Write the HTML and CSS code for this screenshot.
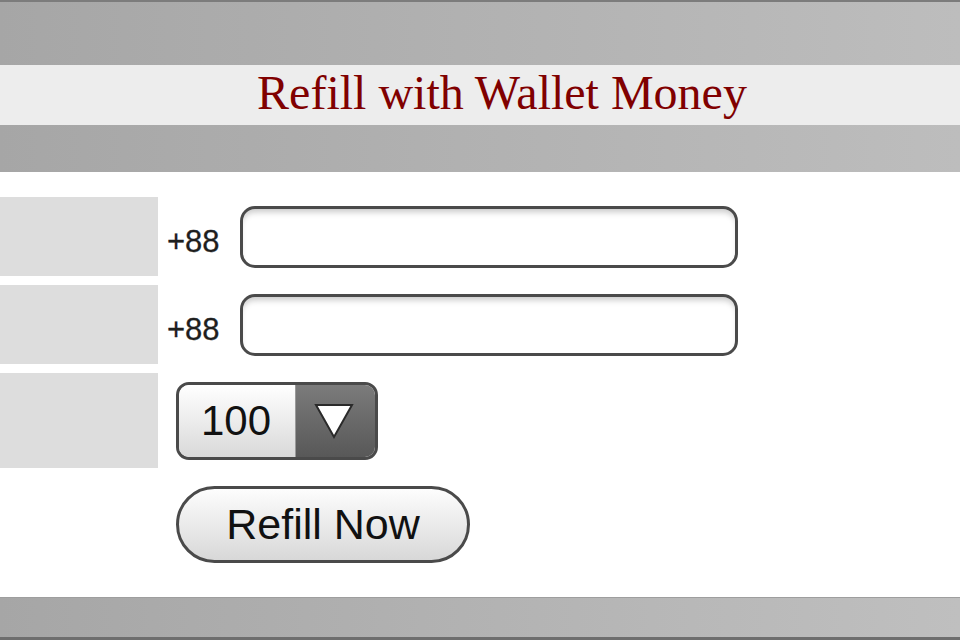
FILE: index.html
```html
<!DOCTYPE html>
<html>
<head>
<meta charset="utf-8">
<link rel="stylesheet" href="styles.css">
</head>
<body>
<div class="page">
  <div class="band band-top"></div>
  <div class="title-band"><h1 class="title">Refill with Wallet Money</h1></div>
  <div class="band band-sub"></div>
  <main class="main">
    <div class="form">
      <div class="row">
        <div class="label-cell"></div>
        <div class="field">
          <span class="prefix">+88</span>
          <div class="input"></div>
        </div>
      </div>
      <div class="row">
        <div class="label-cell"></div>
        <div class="field">
          <span class="prefix">+88</span>
          <div class="input"></div>
        </div>
      </div>
      <div class="row row-tall">
        <div class="label-cell"></div>
        <div class="field field-select">
          <div class="select">
            <span class="select-value">100</span>
            <span class="select-arrow">
              <svg width="42" height="38" viewBox="0 0 42 38">
                <polygon points="3,3 39,3 21,35" fill="#ffffff" stroke="#2a2a2a" stroke-width="2" stroke-linejoin="miter"/>
              </svg>
            </span>
          </div>
        </div>
      </div>
    </div>
    <div class="actions">
      <button class="btn">Refill Now</button>
    </div>
  </main>
  <div class="footer"></div>
</div>
</body>
</html>
```

FILE: styles.css
```css
html, body {
  margin: 0;
  padding: 0;
  background: #ffffff;
}
.page {
  width: 960px;
  height: 640px;
  display: flex;
  flex-direction: column;
  overflow: hidden;
}
.band {
  background: linear-gradient(to right, #a6a6a6, #bdbdbd);
}
.band-top {
  height: 63px;
  border-top: 2px solid #7c7c7c;
}
.band-sub {
  height: 47px;
}
.title-band {
  height: 60px;
  background: #ededed;
  display: flex;
  align-items: center;
  justify-content: center;
  padding-left: 44px;
}
.title {
  margin: 0;
  font-family: "Liberation Serif", "Times New Roman", serif;
  font-weight: normal;
  font-size: 48px;
  line-height: 60px;
  color: #800000;
  padding-bottom: 4px;
}
.main {
  flex: 1;
  padding-top: 25px;
  display: flex;
  flex-direction: column;
}
.form {
  display: flex;
  flex-direction: column;
  gap: 9px;
}
.row {
  display: flex;
  height: 79px;
}
.row-tall {
  height: 95px;
}
.label-cell {
  width: 158px;
  background: #dddddd;
  flex: none;
}
.field {
  display: flex;
  align-items: center;
  padding-left: 9px;
}
.prefix {
  font-family: "Liberation Sans", Arial, sans-serif;
  font-size: 31px;
  color: #1e1e1e;
  width: 73px;
  padding-top: 10px;
  -webkit-text-stroke: 0.3px #1e1e1e;
}
.input {
  width: 492px;
  height: 56px;
  border: 3px solid #4a4a4a;
  border-radius: 15px;
  background: #ffffff;
  box-shadow: inset 0 6px 6px -3px rgba(0, 0, 0, 0.22);
  margin-top: 1px;
}
.field-select {
  padding-left: 18px;
}
.select {
  display: flex;
  width: 196px;
  height: 72px;
  border: 3px solid #4a4a4a;
  border-radius: 13px;
  overflow: hidden;
  margin-top: 1px;
}
.select-value {
  width: 117px;
  background: linear-gradient(to bottom, #ffffff, #d9d9d9);
  font-family: "Liberation Sans", Arial, sans-serif;
  font-size: 42px;
  color: #111111;
  display: flex;
  align-items: center;
  padding-left: 22px;
  box-sizing: border-box;
  border-right: 1px solid #9a9a9a;
}
.select-arrow {
  flex: 1;
  background: linear-gradient(to bottom, #7b7b7b, #585858);
  display: flex;
  align-items: center;
  justify-content: center;
  padding-right: 4px;
}
.actions {
  padding-left: 176px;
  padding-top: 18px;
}
.btn {
  width: 294px;
  height: 77px;
  border: 3px solid #4a4a4a;
  border-radius: 40px;
  background: linear-gradient(to bottom, #fdfdfd, #d8d8d8);
  font-family: "Liberation Sans", Arial, sans-serif;
  font-size: 43px;
  color: #111111;
  padding: 0;
  cursor: pointer;
}
.footer {
  height: 39px;
  border-top: 1px solid #9e9e9e;
  border-bottom: 3px solid #6e6e6e;
  background: linear-gradient(to right, #a6a6a6, #bfbfbf);
}
```
